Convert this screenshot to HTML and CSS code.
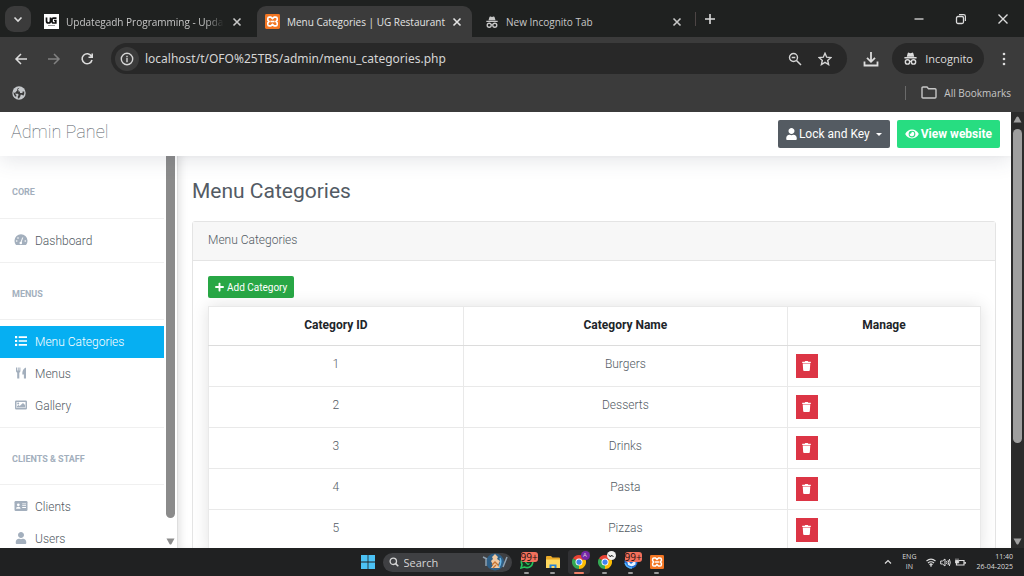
FILE: index.html
```html
<!DOCTYPE html>
<html lang="en">
  <head>
    <meta charset="UTF-8" />
    <meta name="viewport" content="width=device-width, initial-scale=1.0" />
    <title>Menu Categories | UG Restaurant</title>
    <link rel="stylesheet" href="styles.css">
  </head>
  <body>
    <!-- shared icons -->
    <svg class="sprite" width="0" height="0">
      <symbol id="close" viewBox="0 0 10 10"><path d="M1.500 1.500L8.500 8.500M8.500 1.500L1.500 8.500" fill="none" stroke="currentColor" stroke-width="1.600"/></symbol>
      <symbol id="incognito" viewBox="0 0 16 16">
        <path d="M5 2.500Q5.300 1.500 6.300 1.800L8 2.300L9.700 1.800Q10.700 1.500 11 2.500L12 6H4zM1.500 6.500h13v1.500h-13z" fill="currentColor"/>
        <circle cx="4.800" cy="11.700" r="2.300" fill="none" stroke="currentColor" stroke-width="1.500"/>
        <circle cx="11.200" cy="11.700" r="2.300" fill="none" stroke="currentColor" stroke-width="1.500"/>
        <path d="M7 11.300Q8 10.600 9 11.300" fill="none" stroke="currentColor" stroke-width="1.300"/>
      </symbol>
      <symbol id="xampp" viewBox="0 0 16 16">
        <rect width="16" height="16" rx="1.500" fill="#f37623"/>
        <path d="M4.500 3.300H6.200L8 5L9.800 3.300H11.500Q13 3.300 13 4.900V6.500L11.700 8L13 9.500V11.100Q13 12.700 11.500 12.700H9.800L8 11L6.200 12.700H4.500Q3 12.700 3 11.100V9.500L4.300 8L3 6.500V4.900Q3 3.300 4.500 3.300z" fill="none" stroke="#fff" stroke-width="1.700"/>
        <path d="M5.800 8H10.200" stroke="#fff" stroke-width="1.700"/>
      </symbol>
      <symbol id="chrome" viewBox="0 0 16 16">
        <path d="M8 8L1.070 4A8 8 0 0 1 14.930 4z" fill="#e94335"/>
        <path d="M8 8L14.930 4A8 8 0 0 1 8 16z" fill="#fbbc05"/>
        <path d="M8 8V16A8 8 0 0 1 1.070 4z" fill="#34a853"/>
        <circle cx="8" cy="8" r="4" fill="#fff"/>
        <circle cx="8" cy="8" r="3" fill="#3f83f0"/>
      </symbol>
      <symbol id="user" viewBox="0 0 448 512"><path fill="currentColor" d="M224 256c70.7 0 128-57.3 128-128S294.7 0 224 0 96 57.3 96 128s57.3 128 128 128zm89.6 32h-16.700c-22.200 10.200-46.900 16-72.900 16s-50.600-5.800-72.900-16h-16.700C60.200 288 0 348.200 0 422.400V464c0 26.500 21.500 48 48 48h352c26.500 0 48-21.500 48-48v-41.600c0-74.200-60.200-134.400-134.400-134.400z"/></symbol>
      <symbol id="trash" viewBox="0 0 448 512"><path fill="currentColor" d="M432 32H312l-9.400-18.700A24 24 0 0 0 281.100 0H166.800a23.720 23.720 0 0 0-21.400 13.300L136 32H16A16 16 0 0 0 0 48v32a16 16 0 0 0 16 16h416a16 16 0 0 0 16-16V48a16 16 0 0 0-16-16zM53.200 467a48 48 0 0 0 47.900 45h245.800a48 48 0 0 0 47.900-45L416 128H32z"/></symbol>
    </svg>

    <div class="tabstrip">
      <button class="tab-search" aria-label="Search tabs"><svg width="10" height="10" viewBox="0 0 10 10"><path d="M1.500 3.500L5 7L8.500 3.500" fill="none" stroke="currentColor" stroke-width="1.600"/></svg></button>
      <div class="tab">
        <svg width="15" height="15" viewBox="0 0 15 15"><rect width="15" height="15" fill="#fff"/><path d="M2.500 3.500V7Q2.500 9 4.500 9Q6.500 9 6.500 7V3.500M12.500 4.200H9.500Q8 4.200 8 6V7.300Q8 9 9.600 9H11.800V6.500H10" fill="none" stroke="#111" stroke-width="1.700"/><path d="M4 11.500H11" stroke="#999"/></svg>
        <span class="tab-title fade">Updategadh Programming - Upda</span>
        <button class="tab-close" aria-label="Close tab"><svg width="10" height="10"><use href="#close"/></svg></button>
      </div>
      <div class="tab active">
        <svg width="15" height="15"><use href="#xampp"/></svg>
        <span class="tab-title">Menu Categories | UG Restaurant</span>
        <button class="tab-close" aria-label="Close tab"><svg width="10" height="10"><use href="#close"/></svg></button>
      </div>
      <div class="tab">
        <svg width="14" height="14"><use href="#incognito"/></svg>
        <span class="tab-title">New Incognito Tab</span>
        <button class="tab-close" aria-label="Close tab"><svg width="10" height="10"><use href="#close"/></svg></button>
      </div>
      <button class="new-tab" aria-label="New tab"><svg width="12" height="12" viewBox="0 0 12 12"><path d="M6 1V11M1 6H11" stroke="currentColor" stroke-width="1.600"/></svg></button>
      <div class="window-controls">
        <button aria-label="Minimize"><svg width="12" height="12" viewBox="0 0 12 12"><path d="M1.500 6H10.500" stroke="currentColor" stroke-width="1.300"/></svg></button>
        <button aria-label="Restore"><svg width="12" height="12" viewBox="0 0 12 12"><rect x="1.500" y="3.500" width="7" height="7" rx="1.500" fill="none" stroke="currentColor" stroke-width="1.300"/><path d="M4 1.700H8.500Q10.400 1.700 10.400 3.500V8" fill="none" stroke="currentColor" stroke-width="1.200"/></svg></button>
        <button aria-label="Close"><svg width="12" height="12" viewBox="0 0 12 12"><path d="M1.500 1.500L10.500 10.500M10.500 1.500L1.500 10.500" stroke="currentColor" stroke-width="1.400"/></svg></button>
      </div>
    </div>

    <div class="toolbar">
      <button class="tool" aria-label="Back"><svg width="14" height="14" viewBox="0 0 14 14"><path d="M13 7H2M7 2L2 7L7 12" fill="none" stroke="currentColor" stroke-width="1.500"/></svg></button>
      <button class="tool disabled" aria-label="Forward"><svg width="14" height="14" viewBox="0 0 14 14"><path d="M1 7H12M7 2L12 7L7 12" fill="none" stroke="currentColor" stroke-width="1.500"/></svg></button>
      <button class="tool" aria-label="Reload"><svg width="14" height="14" viewBox="0 0 14 14"><path d="M11.500 4.300A5 5 0 1 0 12 8M12.200 1.500V5.200H8.500" fill="none" stroke="currentColor" stroke-width="1.600"/></svg></button>
      <div class="address">
        <button class="site-info" aria-label="Site information"><svg width="14" height="14" viewBox="0 0 14 14"><circle cx="7" cy="7" r="5.700" fill="none" stroke="currentColor" stroke-width="1.400"/><path d="M7 6V10.200M7 3.800V5.200" stroke="currentColor" stroke-width="1.400"/></svg></button>
        <input type="text" aria-label="Address" value="localhost/t/OFO%25TBS/admin/menu_categories.php">
        <button aria-label="Zoom"><svg width="14" height="14" viewBox="0 0 14 14"><circle cx="5.500" cy="5.500" r="4" fill="none" stroke="currentColor" stroke-width="1.400"/><path d="M8.500 8.500L13 13M3.700 5.500H7.300" stroke="currentColor" stroke-width="1.500"/></svg></button>
        <button aria-label="Bookmark this tab"><svg width="14" height="14" viewBox="0 0 14 14"><path d="M7 1.300L8.700 5.200L12.900 5.600L9.700 8.400L10.600 12.500L7 10.300L3.400 12.500L4.300 8.400L1.100 5.600L5.300 5.200z" fill="none" stroke="currentColor" stroke-width="1.400"/></svg></button>
      </div>
      <button class="tool download" aria-label="Downloads"><svg width="16" height="16" viewBox="0 0 16 16"><path d="M8 1V10.500M4 6.800L8 10.800L12 6.800M1.500 10.500V14.500H14.500V10.500" fill="none" stroke="currentColor" stroke-width="1.800"/></svg></button>
      <button class="incognito"><svg width="15" height="15"><use href="#incognito"/></svg>Incognito</button>
      <button class="tool dots" aria-label="Menu"><svg width="4" height="14" viewBox="0 0 4 14"><circle cx="2" cy="2" r="1.300" fill="currentColor"/><circle cx="2" cy="7" r="1.300" fill="currentColor"/><circle cx="2" cy="12" r="1.300" fill="currentColor"/></svg></button>
    </div>

    <div class="bookmarks">
      <button aria-label="Bookmark"><svg width="14" height="14" viewBox="0 0 14 14"><circle cx="7" cy="7" r="6.700" fill="#c4c7ca"/><path d="M7.500 1.800Q5 2.300 5 4H6.500V5.500H8V7H10.500V5.500H12.300Q12.600 8 11.300 9.800L10 8.700H8.500V10L7 12.400L5.800 12.200V10L6.800 9L5.800 7.700H3.500L1.700 6V8L3 10.500H4.300V9L2.500 7.500z" fill="#3b3b3b"/></svg></button>
      <button class="all-bookmarks"><svg width="16" height="13" viewBox="0 0 16 13"><path d="M1 2Q1 1 2 1H6L7.500 2.700H14Q15 2.700 15 3.700V11Q15 12 14 12H2Q1 12 1 11z" fill="none" stroke="currentColor" stroke-width="1.400"/></svg>All Bookmarks</button>
    </div>

    <div class="viewport">
      <div class="page">
        <header class="topbar">
          <h1>Admin Panel</h1>
          <div class="actions">
            <button class="btn btn-dark"><svg width="11" height="12"><use href="#user"/></svg>Lock and Key<span class="caret"></span></button>
            <a href="#" class="btn btn-view"><svg width="14" height="12" viewBox="0 0 576 512"><path fill="currentColor" d="M572.520 241.400C518.290 135.590 410.930 64 288 64S57.680 135.640 3.480 241.410a32.350 32.350 0 0 0 0 29.190C57.710 376.410 165.070 448 288 448s230.320-71.640 284.520-177.410a32.350 32.350 0 0 0 0-29.190zM288 400a144 144 0 1 1 144-144 143.930 143.930 0 0 1-144 144zm0-240a95.310 95.310 0 0 0-25.310 3.790 47.850 47.850 0 0 1-66.900 66.900A95.780 95.780 0 1 0 288 160z"/></svg>View website</a>
          </div>
        </header>
        <div class="columns">
          <aside class="sidebar">
            <nav>
              <h2 class="first">CORE</h2>
              <ul>
                <li><a href="#"><svg width="14" height="12" viewBox="0 0 14 12"><path d="M2 11A6.500 6.500 0 1 1 12 11z" fill="currentColor"/><path d="M6.800 9L8.700 3.500" stroke="#fff" stroke-width="1"/><circle cx="6.800" cy="9" r="1.300" fill="#fff"/><circle cx="2.700" cy="7" r="0.800" fill="#fff"/><circle cx="4" cy="4" r="0.800" fill="#fff"/><circle cx="11.300" cy="7" r="0.800" fill="#fff"/></svg>Dashboard</a></li>
              </ul>
              <h2>MENUS</h2>
              <ul>
                <li><a href="#" class="current"><svg width="14" height="12" viewBox="0 0 14 12"><path d="M1 1H3.200V3.200H1zM1 4.900H3.200V7.100H1zM1 8.800H3.200V11H1zM4.700 1.300H13V2.900H4.700zM4.700 5.200H13V6.800H4.700zM4.700 9.100H13V10.700H4.700z" fill="currentColor"/></svg>Menu Categories</a></li>
                <li><a href="#"><svg width="14" height="12" viewBox="0 0 14 12"><path d="M2 0.500H3V3.500H3.700V0.500H4.700V3.500H5.400V0.500H6.400V4Q6.400 5.200 5.300 5.700V11.500H3.200V5.700Q2 5.200 2 4zM12 0.500V11.500H9.900V7.500H8.300Q8 2 12 0.500z" fill="currentColor"/></svg>Menus</a></li>
                <li><a href="#"><svg width="14" height="12" viewBox="0 0 14 12"><path fill-rule="evenodd" d="M2.300 1.500H11.700Q13 1.500 13 2.700V9.300Q13 10.500 11.700 10.500H2.300Q1 10.500 1 9.300V2.700Q1 1.500 2.300 1.500zM2.500 3V9H11.500V3z" fill="currentColor"/><circle cx="4.200" cy="4.500" r="1" fill="currentColor"/><path d="M3 8.500V7.300L4.500 6L5.700 7L9 4L11 6V8.500z" fill="currentColor"/></svg>Gallery</a></li>
              </ul>
              <h2>CLIENTS &amp; STAFF</h2>
              <ul>
                <li><a href="#"><svg width="14" height="12" viewBox="0 0 14 12"><rect x="0.500" y="1" width="13" height="10" rx="1.200" fill="currentColor"/><circle cx="4.300" cy="4.800" r="1.400" fill="#fff"/><path d="M2 8.700Q2 6.700 4.300 6.700Q6.600 6.700 6.600 8.700zM8.200 3.500H12V4.300H8.200zM8.200 5.300H12V6.100H8.200zM8.200 7.100H12V7.900H8.200z" fill="#fff"/></svg>Clients</a></li>
                <li><a href="#"><svg width="14" height="12"><use href="#user"/></svg>Users</a></li>
              </ul>
            </nav>
            <div class="side-scroll">
              <div class="side-thumb"></div>
              <svg width="9" height="7" viewBox="0 0 9 7"><path d="M0.500 0.500H8.500L5.500 6Q4.500 7 3.500 6z" fill="#8b8b8b"/></svg>
            </div>
          </aside>
          <main class="content">
            <h2 class="page-title">Menu Categories</h2>
            <section class="card">
              <div class="card-header">Menu Categories</div>
              <div class="card-body">
                <button class="btn-add"><svg width="9" height="10" viewBox="0 0 448 512"><path fill="currentColor" d="M416 208H272V64c0-17.670-14.330-32-32-32h-32c-17.670 0-32 14.330-32 32v144H32c-17.670 0-32 14.330-32 32v32c0 17.670 14.330 32 32 32h144v144c0 17.670 14.330 32 32 32h32c17.670 0 32-14.330 32-32V304h144c17.670 0 32-14.330 32-32v-32c0-17.670-14.330-32-32-32z"/></svg>Add Category</button>
                <table>
                  <thead>
                    <tr><th class="col-id">Category ID</th><th class="col-name">Category Name</th><th>Manage</th></tr>
                  </thead>
                  <tbody>
                    <tr><td>1</td><td>Burgers</td><td class="manage"><button class="btn-delete" aria-label="Delete Burgers"><svg width="9" height="10"><use href="#trash"/></svg></button></td></tr>
                    <tr><td>2</td><td>Desserts</td><td class="manage"><button class="btn-delete" aria-label="Delete Desserts"><svg width="9" height="10"><use href="#trash"/></svg></button></td></tr>
                    <tr><td>3</td><td>Drinks</td><td class="manage"><button class="btn-delete" aria-label="Delete Drinks"><svg width="9" height="10"><use href="#trash"/></svg></button></td></tr>
                    <tr><td>4</td><td>Pasta</td><td class="manage"><button class="btn-delete" aria-label="Delete Pasta"><svg width="9" height="10"><use href="#trash"/></svg></button></td></tr>
                    <tr><td>5</td><td>Pizzas</td><td class="manage"><button class="btn-delete" aria-label="Delete Pizzas"><svg width="9" height="10"><use href="#trash"/></svg></button></td></tr>
                  </tbody>
                </table>
              </div>
            </section>
          </main>
        </div>
      </div>
      <div class="page-scroll">
        <svg width="9" height="7" viewBox="0 0 9 7"><path d="M0.500 6.500H8.500L5.500 1Q4.500 0 3.500 1z" fill="#9f9f9f"/></svg>
        <div class="page-track"><div class="page-thumb"></div></div>
        <svg width="9" height="7" viewBox="0 0 9 7"><path d="M0.500 0.500H8.500L5.500 6Q4.500 7 3.500 6z" fill="#9f9f9f"/></svg>
      </div>
    </div>

    <footer class="taskbar">
      <div class="apps">
        <button class="start" aria-label="Start"><svg width="14" height="14" viewBox="0 0 14 14"><path d="M0 0H6.600V6.600H0zM7.400 0H14V6.600H7.400zM0 7.400H6.600V14H0zM7.400 7.400H14V14H7.400z" fill="#4cc2f5"/></svg></button>
        <label class="search">
          <svg width="10" height="10" viewBox="0 0 10 10"><circle cx="4.300" cy="4.300" r="3.200" fill="none" stroke="#d5d5d5" stroke-width="1.300"/><path d="M6.600 6.600L9.300 9.300" stroke="#d5d5d5" stroke-width="1.500"/></svg>
          <input type="text" placeholder="Search" aria-label="Search">
          <svg width="28" height="18" viewBox="0 0 28 18"><ellipse cx="14" cy="9" rx="9" ry="8.500" fill="#2f5f86"/><path d="M2 4L6 6M5 6V13M26 4L22 14" stroke="#8fa0b0" stroke-width="1.500"/><path d="M10 8L12 6L11 4L14 1L17 4L16 6L19 8L17 12L19 15H10L12 12z" fill="#efc9a3"/><path d="M11 12L14 9L18 13M12 15L15 12" stroke="#c57433" stroke-width="1.300" fill="none"/><path d="M19 5Q21 9 18 14" stroke="#69b9ea" stroke-width="1.500" fill="none"/></svg>
        </label>
        <button class="app" aria-label="WhatsApp"><svg width="14" height="14" viewBox="0 0 14 14"><path d="M1 13L2 9.500A5.700 5.700 0 1 1 4.500 12z" fill="#183421" stroke="#25c45d" stroke-width="1.600"/><path d="M5 4.500Q4.500 7 8 9.500L9.500 8.500" fill="none" stroke="#25c45d" stroke-width="1.400"/></svg><span class="count">99+</span></button>
        <button class="app" aria-label="File Explorer"><svg width="14" height="14" viewBox="0 0 14 14"><path d="M0 2Q0 1 1 1H5L6.500 2.500H13Q14 2.500 14 3.500V12H0z" fill="#e9a928"/><path d="M0 4.500H14V13H0z" fill="#ffd95e"/><path d="M3.500 13V9.500H10.500V13H8.500V11H5.500V13z" fill="#2684d8"/></svg></button>
        <button class="app open" aria-label="Chrome"><svg width="14" height="14"><use href="#chrome"/></svg><span class="profile">A</span></button>
        <button class="app" aria-label="Chrome profile"><svg width="14" height="14"><use href="#chrome"/></svg><span class="profile light"><svg width="6" height="4" viewBox="0 0 6 4"><path d="M0.500 0.700L2.500 3L3.500 1L5.500 3" fill="none" stroke="#222"/></svg></span></button>
        <button class="app" aria-label="Thunderbird"><svg width="14" height="14" viewBox="0 0 14 14"><circle cx="7" cy="7" r="6.500" fill="#1f6fd6"/><path d="M3 5L7 9L11.500 5V9.500Q8 12.500 4 10z" fill="#e8f3ff"/><path d="M1 8Q3 13 8 13" stroke="#55b6ff" stroke-width="1.500" fill="none"/></svg><span class="count">99+</span></button>
        <button class="app" aria-label="XAMPP"><svg width="14" height="14"><use href="#xampp"/></svg></button>
      </div>
      <div class="tray">
        <svg width="8" height="6" viewBox="0 0 8 6"><path d="M1 4.500L4 1.500L7 4.500" fill="none" stroke="#ddd" stroke-width="1.200"/></svg>
        <span class="lang">ENG<br>IN</span>
        <span class="status">
          <svg width="10" height="9" viewBox="0 0 10 9"><path d="M0.500 3Q5 -0.700 9.500 3M2 5Q5 2.500 8 5M3.500 6.700Q5 5.300 6.500 6.700" fill="none" stroke="#ddd" stroke-width="1.200"/><circle cx="5" cy="7.800" r="0.900" fill="#ddd"/></svg>
          <svg width="11" height="9" viewBox="0 0 11 9"><path d="M0.700 3H2.500L5 1V8L2.500 6H0.700zM6.500 3Q7.500 4.500 6.500 6M8 2Q9.500 4.500 8 7M9.300 1Q11.300 4.500 9.300 8" fill="none" stroke="#ddd"/></svg>
          <svg width="11" height="9" viewBox="0 0 11 9"><path d="M4 2.500H9V7H1.500V4.500M10.300 4V5.700" fill="none" stroke="#ddd" stroke-width="1.200"/><path d="M1 0.500V2.500M3 0.500V2.500M0.500 2.500H3.700V5H0.500z" fill="#ddd" stroke="#ddd" stroke-width="0.800"/></svg>
        </span>
        <span class="clock">11:40<br>26-04-2025</span>
      </div>
    </footer>
  </body>
</html>
```

FILE: styles.css
```css
*{
    margin: 0;
    padding: 0;
    box-sizing: border-box;
}
body{
    height: 100vh;
    display: flex;
    flex-direction: column;
    overflow: hidden;
    background-color: #3b3b3b;
    color: #dcdcdc;
    font-family: "Open Sans", "Noto Sans", sans-serif;
    font-size: 10px;
}
button, input{
    font: inherit;
    color: inherit;
    background: none;
    border: none;
    outline: none;
}
button{
    display: flex;
    align-items: center;
    justify-content: center;
    cursor: pointer;
}
a{
    color: inherit;
    text-decoration: none;
}
svg{
    flex: none;
    display: block;
}
.sprite{
    position: absolute;
}

/* browser tabs */
.tabstrip{
    flex: none;
    height: 37px;
    display: flex;
    align-items: center;
    background-color: #1f2120;
    padding-left: 5px;
}
.tab-search{
    width: 26px;
    height: 26px;
    border-radius: 9px;
    background-color: #3b3b3b;
}
.tab{
    width: 220px;
    height: 31px;
    align-self: flex-end;
    display: flex;
    align-items: center;
    padding: 0 10px 0 13px;
    color: #c7c7c7;
}
.tab.active{
    width: 215px;
    background-color: #3b3b3b;
    border-radius: 9px 9px 0 0;
    padding-left: 8px;
    color: #e3e3e3;
}
.tab-search + .tab{
    width: 226px;
    padding-right: 15px;
}
.tab-title{
    flex: 1;
    min-width: 0;
    margin: 0 8px 0 7px;
    white-space: nowrap;
}
.fade{
    mask-image: linear-gradient(to right, black 88%, transparent);
}
.tab-close{
    width: 10px;
    height: 20px;
}
.new-tab{
    height: 14px;
    padding-left: 8px;
    border-left: 1px solid #4d4545;
    margin-left: 3px;
}
.window-controls{
    display: flex;
    gap: 30px;
    margin-left: auto;
    padding-right: 15px;
}

/* address bar */
.toolbar{
    flex: none;
    height: 43px;
    display: flex;
    align-items: center;
    padding: 0 18px 0 14px;
}
.tool{
    width: 14px;
    height: 30px;
    margin-right: 19px;
}
.disabled{
    color: #818181;
}
.address{
    flex: 1;
    height: 31px;
    display: flex;
    align-items: center;
    gap: 16px;
    padding: 0 15px 0 4px;
    margin-left: -2px;
    border-radius: 16px;
    background-color: #282828;
    color: #d5d5d5;
}
.site-info{
    width: 24px;
    height: 24px;
    border-radius: 50%;
    background-color: #3b3b3b;
}
.address input{
    flex: 1;
    min-width: 0;
    margin-left: -10px;
    font-family: "Noto Sans", sans-serif;
    font-size: 12px;
}
.download{
    width: 16px;
    margin: 0 13px 0 16px;
}
.incognito{
    height: 31px;
    gap: 7px;
    padding: 0 11px;
    border-radius: 16px;
    background-color: #282828;
    font-size: 11px;
}
.dots{
    width: 4px;
    margin: 0 0 0 18px;
}
.bookmarks{
    flex: none;
    height: 32px;
    display: flex;
    align-items: center;
    justify-content: space-between;
    padding: 0 13px 7px 12px;
}
.all-bookmarks{
    height: 14px;
    gap: 7px;
    padding-left: 15px;
    border-left: 1px solid #6a6a6a;
    color: #c7c7c7;
}

/* web page */
.viewport{
    flex: 1;
    min-height: 0;
    display: flex;
}
.page{
    flex: 1;
    min-width: 0;
    display: flex;
    flex-direction: column;
    overflow: hidden;
    background-color: white;
    color: #535b64;
    font-family: Roboto, sans-serif;
    font-size: 12px;
    font-weight: 300;
}
.topbar{
    position: relative;
    z-index: 2;
    flex: none;
    height: 44px;
    display: flex;
    align-items: center;
    justify-content: space-between;
    padding: 0 11px;
    background-color: white;
    box-shadow: 0 5px 20px rgba(60, 70, 90, 0.13);
}
.topbar h1{
    padding-bottom: 5px;
    font-size: 18px;
    font-weight: 100;
}
.actions{
    display: flex;
    gap: 7px;
}
.btn{
    height: 28px;
    display: flex;
    align-items: center;
    gap: 2px;
    padding: 0 8px;
    border-radius: 2px;
    color: white;
}
.btn-dark{
    background-color: #545b62;
    font-weight: 400;
}
.btn-view{
    background-color: #27dd81;
    font-weight: 700;
}
.caret{
    margin-left: 4px;
    border: 3px solid transparent;
    border-top-color: white;
    border-bottom: none;
}
.columns{
    flex: 1;
    min-height: 0;
    display: flex;
}
.sidebar{
    flex: none;
    width: 178px;
    display: flex;
    justify-content: space-between;
    overflow: hidden;
    border-right: 1px solid #dedede;
}
.sidebar nav{
    width: 164px;
}
.sidebar h2{
    height: 57px;
    padding-top: 25px;
    padding-left: 12px;
    border-bottom: 1px solid #f0f0f0;
    color: #a3afbd;
    font-size: 9px;
    line-height: 12px;
    font-weight: 700;
}
.sidebar h2.first{
    height: 63px;
    padding-top: 30px;
}
.sidebar ul{
    list-style: none;
    padding: 6px 0 5px;
    border-bottom: 1px solid #f0f0f0;
}
.sidebar li a{
    height: 32px;
    display: flex;
    align-items: center;
    gap: 7px;
    padding-left: 14px;
}
.sidebar li svg{
    margin-bottom: 3px;
    color: #a3afbd;
}
.sidebar .current{
    background-color: #06aff2;
    color: white;
}
.sidebar .current svg{
    color: white;
}
.side-scroll{
    display: flex;
    flex-direction: column;
    align-items: center;
    justify-content: space-between;
    padding: 0 2px 3px 0;
}
.side-thumb{
    width: 9px;
    height: 93%;
    border-radius: 0 0 5px 5px;
    background-color: #8b8b8b;
}
.content{
    flex: 1;
    min-width: 0;
    padding: 20px 15px 0 14px;
    box-shadow: inset 6px 0 8px -4px rgba(0, 0, 0, 0.12);
}
.page-title{
    margin-bottom: 15px;
    font-size: 21px;
    line-height: 30px;
    font-weight: 400;
}
.card{
    border: 1px solid #e4e4e4;
    border-radius: 3px;
}
.card-header{
    padding: 8px 15px 10px;
    background-color: #f7f7f7;
    border-bottom: 1px solid #e4e4e4;
    line-height: 20px;
}
.card-body{
    padding: 15px 14px 14px 15px;
}
.btn-add{
    height: 22px;
    gap: 3px;
    padding: 0 7px;
    margin-bottom: 8px;
    border-radius: 2px;
    background-color: #28a745;
    color: white;
    font-size: 10px;
    font-weight: 400;
}
table{
    width: 100%;
    border-collapse: collapse;
    table-layout: fixed;
    text-align: center;
    line-height: 20px;
    background-color: white;
    box-shadow: 0 0 16px rgba(0, 0, 0, 0.12);
}
th, td{
    border: 1px solid #e9e9e9;
    padding: 8px;
    vertical-align: top;
}
th{
    height: 39px;
    border-bottom: 1px solid #dcdcdc;
    color: #212529;
    font-weight: 700;
}
td{
    height: 41px;
}
.col-id{
    width: 33%;
}
.col-name{
    width: 42%;
}
.btn-delete{
    width: 22px;
    height: 24px;
    background-color: #dc3545;
    color: white;
}
.page-scroll{
    flex: none;
    width: 13px;
    display: flex;
    flex-direction: column;
    align-items: center;
    padding: 4px 0 3px;
    background-color: #2b2b2b;
}
.page-track{
    flex: 1;
    padding: 6px 0;
}
.page-thumb{
    width: 9px;
    height: 78%;
    border-radius: 5px;
    background-color: #9f9f9f;
}

/* windows taskbar */
.taskbar{
    position: relative;
    flex: none;
    height: 28px;
    display: flex;
    align-items: center;
    justify-content: center;
    background-color: #202122;
}
.apps{
    display: flex;
    align-items: center;
    gap: 4px;
    padding-left: 4px;
}
.start{
    width: 14px;
    margin-right: 4px;
}
.search{
    width: 129px;
    height: 19px;
    display: flex;
    align-items: center;
    gap: 5px;
    padding: 0 3px 0 6px;
    border-radius: 10px;
    background-color: #3f4043;
}
.search input{
    flex: 1;
    min-width: 0;
    font-size: 11px;
}
.search input::placeholder{
    color: #d5d5d5;
}
.app{
    position: relative;
    width: 22px;
    height: 24px;
}
.app::after{
    content: "";
    position: absolute;
    bottom: 0;
    width: 5px;
    height: 2px;
    border-radius: 1px;
    background-color: #9a9a9a;
}
.app.open{
    border-radius: 3px;
    background-color: #303033;
}
.app.open::after{
    width: 10px;
    background-color: #f08068;
}
.count{
    position: absolute;
    top: 2px;
    left: 5px;
    background-color: #f2705c;
    color: #1c1010;
    border-radius: 3px;
    font-size: 10px;
    line-height: 10px;
}
.profile{
    position: absolute;
    top: 1px;
    right: 0;
    width: 9px;
    height: 9px;
    display: flex;
    align-items: center;
    justify-content: center;
    border-radius: 50%;
    background-color: #7627a8;
    font-size: 6px;
    line-height: 9px;
}
.profile.light{
    background-color: #f0f0f0;
}
.tray{
    position: absolute;
    right: 11px;
    display: flex;
    align-items: center;
    gap: 10px;
    font-size: 7px;
    line-height: 10px;
    text-align: center;
}
.status{
    display: flex;
    gap: 4px;
}
.clock{
    text-align: right;
}
```
